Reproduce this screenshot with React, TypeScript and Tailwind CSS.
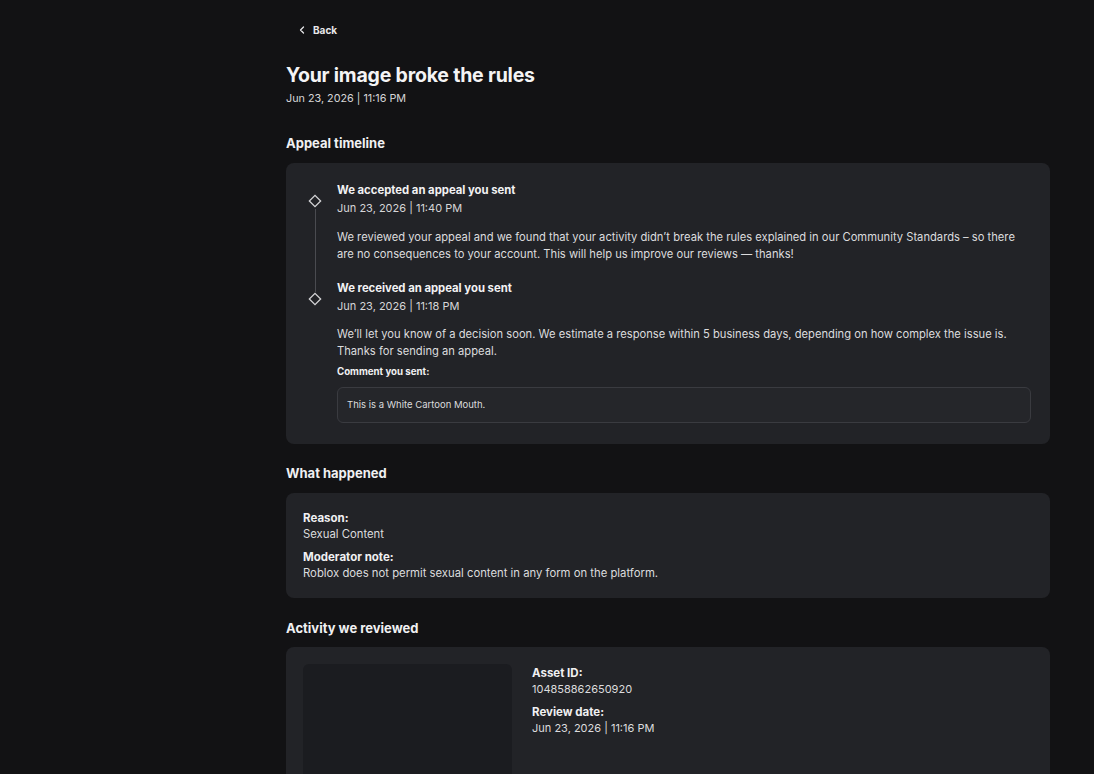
import { ChevronLeft } from 'lucide-react'

const font = { fontFamily: 'Inter, "Noto Sans", sans-serif' }

function Diamond() {
  return (
    <svg width="14" height="14" viewBox="0 0 14 14" className="shrink-0">
      <rect x="3" y="3" width="8" height="8" transform="rotate(45 7 7)" fill="#222327" stroke="#d4d4d6" strokeWidth="1.3" />
    </svg>
  )
}

function TimelineItem({ title, date, children, last }: { title: string; date: string; children: React.ReactNode; last?: boolean }) {
  return (
    <div className="flex">
      <div className="w-[51px] flex flex-col items-center pt-[12px] shrink-0 pl-[7px]">
        <Diamond />
        {!last && <div className="w-px flex-1 bg-[#4a4b50] mt-[1px] -mb-[12px]" />}
      </div>
      <div className="flex-1 pr-[19px]">
        <div className="text-[11.3px] font-bold text-[#f2f2f3] leading-[17px]">{title}</div>
        <div className="text-[11px] text-[#d6d6d8] leading-[18px]">{date}</div>
        {children}
      </div>
    </div>
  )
}

export default function App() {
  return (
    <div className="min-h-screen bg-[#121214] text-white" style={font}>
      <div className="w-[764px] ml-[286px] pt-[22px]">
        <button className="flex items-center gap-[5px] pl-[10px] h-[16px] text-[10px] font-bold text-[#e8e8ea]">
          <ChevronLeft size={12} strokeWidth={2.5} />
          Back
        </button>

        <h1 className="mt-[24px] text-[19.5px] font-bold leading-[26px] tracking-[-0.2px] text-[#f4f4f5]">Your image broke the rules</h1>
        <div className="text-[10.8px] leading-[14px] text-[#d6d6d8] mt-[4px]">Jun 23, 2026 | 11:16 PM</div>

        <h2 className="mt-[28px] text-[13px] font-bold leading-[18px] text-[#f0f0f2]">Appeal timeline</h2>
        <div className="mt-[11px] rounded-[8px] bg-[#222327] pt-[19px] pb-[21px]">
          <TimelineItem title="We accepted an appeal you sent" date="Jun 23, 2026 | 11:40 PM">
            <p className="mt-[12px] text-[11.2px] leading-[17px] text-[#dcdcde]">
              We reviewed your appeal and we found that your activity didn’t break the rules explained in our Community Standards – so there are no consequences to your account. This will help us improve our reviews — thanks!
            </p>
            <div className="h-[17px]" />
          </TimelineItem>
          <TimelineItem title="We received an appeal you sent" date="Jun 23, 2026 | 11:18 PM" last>
            <p className="mt-[11px] text-[11.2px] leading-[17px] text-[#dcdcde]">
              We’ll let you know of a decision soon. We estimate a response within 5 business days, depending on how complex the issue is. Thanks for sending an appeal.
            </p>
            <div className="mt-[5px] text-[9.7px] font-bold leading-[14px] text-[#f0f0f2]">Comment you sent:</div>
            <div className="mt-[8px] h-[36px] rounded-[6px] border border-[#3a3b40] bg-[#25262a] flex items-center px-[9px] text-[9.5px] text-[#dcdcde]">
              This is a White Cartoon Mouth.
            </div>
          </TimelineItem>
        </div>

        <h2 className="mt-[20px] text-[13px] font-bold leading-[18px] text-[#f0f0f2]">What happened</h2>
        <div className="mt-[11px] rounded-[8px] bg-[#222327] px-[17px] pt-[17px] pb-[18px] h-[105px]">
          <div className="text-[11.5px] font-bold leading-[16px] text-[#f0f0f2]">Reason:</div>
          <div className="text-[11.3px] leading-[16px] text-[#dcdcde]">Sexual Content</div>
          <div className="mt-[7px] text-[11.5px] font-bold leading-[16px] text-[#f0f0f2]">Moderator note:</div>
          <div className="text-[11.3px] leading-[16px] text-[#dcdcde]">Roblox does not permit sexual content in any form on the platform.</div>
        </div>

        <h2 className="mt-[21px] text-[13px] font-bold leading-[18px] text-[#f0f0f2]">Activity we reviewed</h2>
        <div className="mt-[10px] rounded-[8px] bg-[#222327] p-[17px] flex gap-[20px]">
          <div className="w-[209px] h-[209px] rounded-[6px] bg-[#1b1c20] shrink-0" />
          <div className="pt-[1px]">
            <div className="text-[11.5px] font-bold leading-[16px] text-[#f0f0f2]">Asset ID:</div>
            <div className="text-[11px] leading-[16px] text-[#dcdcde]">104858862650920</div>
            <div className="mt-[7px] text-[11.5px] font-bold leading-[16px] text-[#f0f0f2]">Review date:</div>
            <div className="text-[11px] leading-[16px] text-[#dcdcde]">Jun 23, 2026 | 11:16 PM</div>
          </div>
        </div>
      </div>
    </div>
  )
}
